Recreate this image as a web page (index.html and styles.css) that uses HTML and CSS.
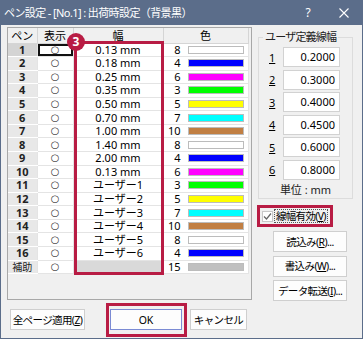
FILE: index.html
```html
<!DOCTYPE html>
<html lang="ja">
<head>
  <meta charset="UTF-8">
  <title>ペン設定</title>
  <link rel="stylesheet" href="styles.css">
</head>
<body>

  <div class="window">
    <div class="titlebar">
      <span class="title">ペン設定 - [No.1] : 出荷時設定（背景黒）</span>
      <span class="help">?</span>
      <span class="close">
        <svg width="10" height="10" viewBox="0 0 10 10"><path d="M0.5 0.5 L9.5 9.5 M9.5 0.5 L0.5 9.5" stroke="#fff" stroke-width="1.1" fill="none"/></svg>
      </span>
    </div>

    <div class="main">
      <div class="grid-frame">
        <table class="pen-table">
          <colgroup>
            <col class="col-pen"><col class="col-show"><col class="col-width"><col class="col-color">
          </colgroup>
          <thead>
            <tr><th>ペン</th><th>表示</th><th>幅</th><th>色</th></tr>
          </thead>
          <tbody id="pen-rows"></tbody>
        </table>
        <div class="highlight-col"></div>
        <div class="badge">3</div>
      </div>

      <div class="side">
        <fieldset class="user-widths">
          <legend>ユーザ定義線幅</legend>
          <div class="uw-row"><span class="uw-label">1</span><span class="uw-input">0.2000</span></div>
          <div class="uw-row"><span class="uw-label">2</span><span class="uw-input">0.3000</span></div>
          <div class="uw-row"><span class="uw-label">3</span><span class="uw-input">0.4000</span></div>
          <div class="uw-row"><span class="uw-label">4</span><span class="uw-input">0.4500</span></div>
          <div class="uw-row"><span class="uw-label">5</span><span class="uw-input">0.6000</span></div>
          <div class="uw-row"><span class="uw-label">6</span><span class="uw-input">0.8000</span></div>
          <div class="unit">単位 : mm</div>
        </fieldset>

        <div class="check-row">
          <span class="checkbox">
            <svg width="9" height="9" viewBox="0 0 9 9"><path d="M1 4.5 L3.5 7 L8 1.5" stroke="#666" stroke-width="1.2" fill="none"/></svg>
          </span>
          <span class="check-label">線幅有効(<u>V</u>)</span>
        </div>

        <button class="btn side-btn first">読込み(<u>R</u>)...</button>
        <button class="btn side-btn">書込み(<u>W</u>)...</button>
        <button class="btn side-btn">データ転送(<u>I</u>)...</button>
      </div>
    </div>

    <div class="footer">
      <button class="btn all-pages">全ページ適用(<u>Z</u>)</button>
      <span class="ok-mark"><button class="btn ok">OK</button></span>
      <button class="btn cancel">キャンセル</button>
    </div>
  </div>

  <script>
    const white = '#ffffff', blue = '#0000ff', magenta = '#ff00ff', green = '#00ff00',
          yellow = '#ffff00', cyan = '#00ffff', brown = '#c17f43';
    const pens = [
      ['1', '0.13 mm', 8, white], ['2', '0.18 mm', 4, blue], ['3', '0.25 mm', 6, magenta],
      ['4', '0.35 mm', 3, green], ['5', '0.50 mm', 5, yellow], ['6', '0.70 mm', 7, cyan],
      ['7', '1.00 mm', 10, brown], ['8', '1.40 mm', 8, white], ['9', '2.00 mm', 4, blue],
      ['10', '0.13 mm', 6, magenta], ['11', 'ユーザー1', 3, green], ['12', 'ユーザー2', 5, yellow],
      ['13', 'ユーザー3', 7, cyan], ['14', 'ユーザー4', 10, brown], ['15', 'ユーザー5', 8, white],
      ['16', 'ユーザー6', 4, blue], ['補助', '', 15, '#c0c0c0']
    ];

    const rows = document.getElementById('pen-rows');
    pens.forEach((pen, index) => {
      const tr = document.createElement('tr');
      if (index === 0) tr.className = 'selected';
      tr.innerHTML =
        `<td class="pen${pen[0] === '補助' ? ' aux' : ''}">${pen[0]}</td>` +
        `<td class="show">○</td>` +
        `<td class="width${pen[1] === '' ? ' empty' : ''}">${pen[1]}</td>` +
        `<td class="color"><div class="color-cell"><span class="num">${pen[2]}</span>` +
        `<span class="swatch" style="background:${pen[3]}"></span></div></td>`;
      rows.appendChild(tr);
    });
  </script>

</body>
</html>
```

FILE: styles.css
```css
* {
  margin: 0;
  padding: 0;
  box-sizing: border-box;
}

body {
  font-family: "Noto Sans", "Noto Sans CJK JP", sans-serif;
  font-size: 11px;
  color: #000;
  background: #fff;
}

.window {
  width: 363px;
  height: 339px;
  border: 1px solid #5b6d8a;
  border-top: none;
  background: #f0f0f0;
  display: flex;
  flex-direction: column;
}

/* title bar */
.titlebar {
  height: 25px;
  flex: none;
  background: #5b6d8a;
  color: #fff;
  display: flex;
  align-items: center;
  padding-left: 3px;
}

.title {
  flex: 1;
  font-size: 11px;
  letter-spacing: -0.6px;
  line-height: 14px;
  white-space: nowrap;
}

.help,
.close {
  width: 36px;
  display: flex;
  justify-content: center;
  align-items: center;
  font-size: 12px;
}

/* main area */
.main {
  display: flex;
  height: 275px;
  flex: none;
}

.grid-frame {
  position: relative;
  margin: 2px 0 0 6px;
  width: 245px;
  height: 273px;
  border: 1px solid #a8a8a8;
  background: #f0f0f0;
}

.pen-table {
  width: 240px;
  table-layout: fixed;
  border-collapse: collapse;
  background: #fff;
}

.col-pen { width: 29px; }
.col-show { width: 36px; }
.col-width { width: 90px; }
.col-color { width: 85px; }

.pen-table th {
  height: 15px;
  font-weight: normal;
  line-height: 13px;
  background: #f0f0f0;
  border-right: 1px solid #d5d5d5;
  border-bottom: 1px solid #d5d5d5;
}

.pen-table td {
  height: 13.57px;
  line-height: 12px;
  text-align: center;
  border-right: 1px solid #e4e4e4;
  border-bottom: 1px solid #e4e4e4;
  white-space: nowrap;
}

.pen-table td.pen {
  background: #e8e8e8;
  font-weight: bold;
  color: #222;
  border-bottom: 1px solid #fff;
}

.pen-table td.aux {
  font-weight: normal;
  font-size: 10px;
}

.pen-table tr.selected td.pen {
  background: #d4d4d4;
}

.pen-table tr.selected td.show {
  box-shadow: inset 0 0 0 2px #111;
}

.pen-table td.show {
  font-family: "DejaVu Sans", sans-serif;
  font-size: 10px;
  color: #333;
}

.pen-table td.empty {
  background: #d9d9d9;
}

.color-cell {
  display: flex;
  align-items: center;
}

.color-cell .num {
  width: 17px;
  text-align: right;
}

.color-cell .swatch {
  margin-left: 7px;
  width: 56px;
  height: 8px;
  border: 1px solid #bcbcbc;
}

.highlight-col {
  position: absolute;
  left: 66px;
  top: 13px;
  width: 90px;
  height: 234px;
  border: 3px solid #b81c44;
  pointer-events: none;
}

.badge {
  position: absolute;
  left: 59px;
  top: 5px;
  width: 18px;
  height: 18px;
  border-radius: 50%;
  background: #b81c44;
  color: #fff;
  font-weight: bold;
  font-size: 12px;
  line-height: 18px;
  text-align: center;
}

/* right side */
.side {
  margin-left: 4px;
  width: 104px;
}

.user-widths {
  margin: 5px 0 0 2px;
  width: 95px;
  border: 1px solid #dcdcdc;
  padding: 3px 4px 1px 4px;
}

.user-widths legend {
  padding: 0 2px;
  line-height: 14px;
  color: #222;
  letter-spacing: -0.8px;
  white-space: nowrap;
}

.uw-row {
  display: flex;
  align-items: center;
  height: 20px;
  margin-bottom: 2.5px;
  padding-left: 6px;
}

.uw-row:last-of-type {
  margin-bottom: 0;
}

.uw-label {
  width: 14px;
  text-decoration: underline;
}

.uw-input {
  width: 57px;
  height: 20px;
  background: #fff;
  border: 1px solid #d2d2d2;
  text-align: right;
  padding-right: 4px;
  line-height: 17px;
}

.unit {
  margin-top: 3.5px;
  line-height: 14px;
  text-align: center;
  color: #222;
}

.check-row {
  margin: 6px 0 0 1px;
  width: 76px;
  height: 22px;
  border: 3px solid #b81c44;
  display: flex;
  align-items: center;
  padding-left: 2px;
}

.checkbox {
  flex: none;
  width: 11px;
  height: 11px;
  border: 1px solid #c8c8c8;
  background: #fff;
  display: flex;
  align-items: center;
  justify-content: center;
}

.check-label {
  margin-left: 1px;
  border: 1px dotted #555;
  padding: 0 1px;
  line-height: 12px;
  font-size: 10.5px;
  letter-spacing: -0.7px;
  white-space: nowrap;
}

.btn {
  font-family: inherit;
  font-size: 10.5px;
  letter-spacing: -0.6px;
  white-space: nowrap;
  color: #000;
  background: #fdfdfd;
  border: 1px solid #cfcfcf;
  height: 21px;
  line-height: 18px;
  text-align: center;
  padding: 0;
}

.side-btn {
  display: block;
  margin: 3.5px 0 0 17px;
  width: 74px;
}

.side-btn.first {
  margin-top: 4px;
}

/* footer */
.footer {
  display: flex;
  align-items: flex-start;
  padding-top: 3px;
}

.all-pages {
  margin: 6px 0 0 9px;
  width: 75px;
}

.ok-mark {
  margin-left: 21px;
  width: 81px;
  height: 34px;
  border: 3px solid #b81c44;
  padding: 3px 2px 4px 1px;
}

.ok {
  width: 72px;
  border-color: #7b8bd4;
  letter-spacing: 0;
}

.cancel {
  margin: 6px 0 0 3px;
  width: 57px;
}
```
